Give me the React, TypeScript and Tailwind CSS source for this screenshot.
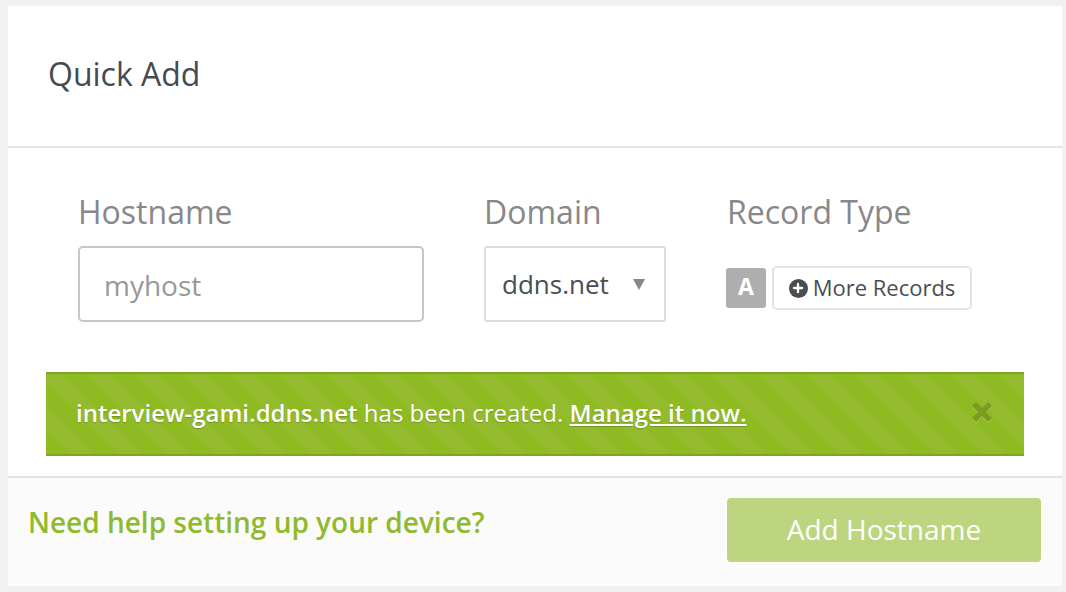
import { Plus } from 'lucide-react'

export default function App() {
  return (
    <div className="h-[592px] w-[1066px] overflow-hidden bg-[#f0f1f3] pt-[6px] pl-2 pr-1 font-['Open_Sans',sans-serif]">
      <div className="h-[580px] bg-white">
        {/* header */}
        <div className="h-[142px] border-b-2 border-[#e4e4e6] pl-[40px] pt-[46px]">
          <h2 className="text-[32px] leading-[44px] text-[#454a50]">Quick Add</h2>
        </div>

        {/* form */}
        <div className="h-[330px] border-b-2 border-[#e4e4e6]">
          <div className="flex pl-[70px] pt-[42px]">
            <div className="w-[406px]">
              <label className="block text-[32px] leading-[44px] text-[#87888a]">Hostname</label>
              <div className="mt-[12px] flex h-[76px] w-[346px] items-center rounded-[5px] border-2 border-[#c6c6c6] pl-[24px] pt-[2px] text-[28px] leading-[42px] text-[#98989a]">
                myhost
              </div>
            </div>
            <div className="w-[243px]">
              <label className="block text-[32px] leading-[44px] text-[#87888a]">Domain</label>
              <div className="mt-[12px] flex h-[76px] w-[182px] items-center justify-between rounded-[3px] border-2 border-[#dcdcdc] pl-4 pr-[19px] text-[26px] text-[#4a4d50]">
                ddns.net
                <span className="h-0 w-0 border-x-[6px] border-t-[11px] border-x-transparent border-t-[#888888]" />
              </div>
            </div>
            <div>
              <label className="block text-[32px] leading-[44px] text-[#87888a]">Record Type</label>
              <div className="mt-[32px] flex items-center gap-[6px] -ml-[1px]">
                <span className="flex h-10 w-10 items-center justify-center rounded-[3px] bg-[#aeaeae] pb-[3px] text-[23px] font-bold text-white">A</span>
                <button className="flex h-11 w-[200px] items-center justify-center gap-[5px] rounded-[5px] border-2 border-[#e2e2e2] pb-[2px] text-[22px] text-[#494d52]">
                  <span className="mt-[2px] flex h-[19px] w-[19px] items-center justify-center rounded-full bg-[#494d52]">
                    <Plus size={14} strokeWidth={4} className="text-white" />
                  </span>
                  More Records
                </button>
              </div>
            </div>
          </div>

          {/* success alert */}
          <div className="mt-[50px] ml-[38px] flex h-[84px] w-[978px] items-center justify-between border-y-2 border-y-[#7fa61f] bg-[#8fbb22] bg-[repeating-linear-gradient(45deg,#8fbb22_0,#8fbb22_17px,#94bb2d_17px,#94bb2d_34px)] pl-[30px] pr-[32px] text-[24px] text-white [text-shadow:0_1px_1px_rgba(0,0,0,0.2)]">
            <p className="-mt-[3px]">
              <strong className="font-semibold">interview-gami.ddns.net</strong> has been created.{' '}
              <a className="font-semibold underline">Manage it now.</a>
            </p>
            <svg width="20" height="20" viewBox="0 0 20 20" className="-mt-[4px] text-[#7c9c20] drop-shadow-[0_1px_0_rgba(255,255,255,0.25)]">
              <path d="M0 4 4 0 10 6 16 0 20 4 14 10 20 16 16 20 10 14 4 20 0 16 6 10Z" fill="currentColor" />
            </svg>
          </div>
        </div>

        {/* footer */}
        <div className="flex h-[108px] items-start justify-between bg-[#fbfbfb] pl-[20px] pr-[21px] pt-5">
          <a className="text-[28px] leading-[48px] font-semibold text-[#8fba2e]">Need help setting up your device?</a>
          <button className="h-16 w-[314px] rounded-[4px] bg-[#bcd57e] pb-[2px] text-[28px] text-white">Add Hostname</button>
        </div>
      </div>
    </div>
  )
}
